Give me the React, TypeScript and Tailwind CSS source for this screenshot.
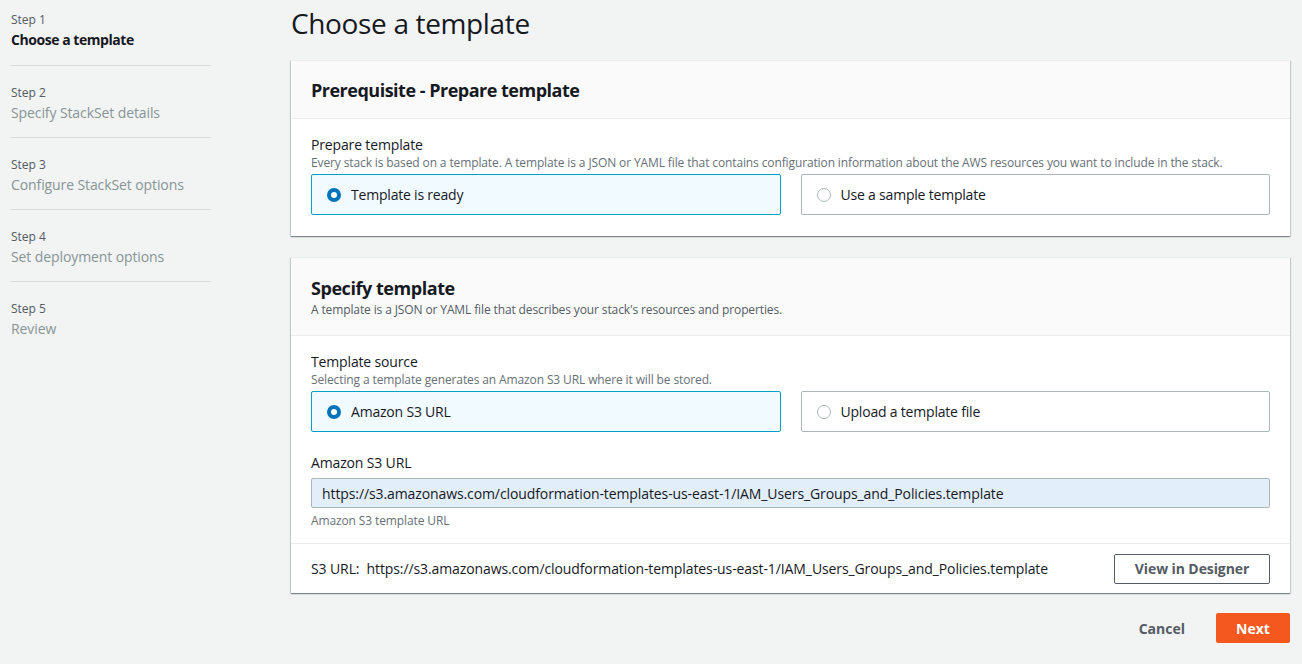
import React from "react";

const font = { fontFamily: '"Open Sans", "Noto Sans", Arial, sans-serif' };

function Radio({ checked }: { checked: boolean }) {
  return checked ? (
    <span className="w-[14px] h-[14px] rounded-full bg-[#0073bb] flex items-center justify-center shrink-0">
      <span className="w-[6px] h-[6px] rounded-full bg-white" />
    </span>
  ) : (
    <span className="w-[14px] h-[14px] rounded-full border border-[#aab7b8] bg-white shrink-0" />
  );
}

function Tile({ label, checked }: { label: string; checked: boolean }) {
  return (
    <div
      className={
        "flex-1 h-[41px] flex items-center gap-[10px] px-[15px] rounded-[2px] border " +
        (checked ? "border-[#00a1c9] bg-[#f1faff]" : "border-[#aab7b8] bg-white")
      }
    >
      <Radio checked={checked} />
      <span className="text-[14px] text-[#16191f] tracking-[-0.2px]">{label}</span>
    </div>
  );
}

const steps = [
  { n: "Step 1", t: "Choose a template", active: true },
  { n: "Step 2", t: "Specify StackSet details" },
  { n: "Step 3", t: "Configure StackSet options" },
  { n: "Step 4", t: "Set deployment options" },
  { n: "Step 5", t: "Review" },
];

const cardShadow =
  "shadow-[0_1px_1px_0_rgba(0,28,36,0.3),1px_1px_1px_0_rgba(0,28,36,0.15),-1px_1px_1px_0_rgba(0,28,36,0.15)]";

export default function App() {
  return (
    <div className="w-[1302px] h-[664px] bg-[#f2f3f3] flex overflow-hidden" style={font}>
      <nav className="w-[291px] pl-[11px] shrink-0">
        <div className="w-[200px]">
          {steps.map((s, i) => (
            <div
              key={s.n}
              className={
                (i === 0 ? "h-[66px] pt-[12px] " : "h-[72px] pt-[19px] ") +
                (i < steps.length - 1 ? "border-b border-[#d5dbdb]" : "")
              }
            >
              <div className="text-[12px] leading-[16px] text-[#545b64]">{s.n}</div>
              <div
                className={
                  "text-[14px] leading-[22px] mt-[1px] " +
                  (s.active ? "font-bold text-[#16191f] tracking-[-0.45px]" : "text-[#879596] tracking-[-0.1px]")
                }
              >
                {s.t}
              </div>
            </div>
          ))}
        </div>
      </nav>
      <main className="w-[999px] pt-[5px]">
        <h1 className="text-[28px] leading-[36px] text-[#16191f] tracking-[-0.35px]">Choose a template</h1>
        <section className={"mt-[19px] bg-white border-t border-[#eaeded] " + cardShadow}>
          <div className="bg-[#fafafa] border-b border-[#eaeded] h-[58px] px-[20px] flex items-center">
            <h2 className="text-[18px] font-bold text-[#16191f] leading-[24px] tracking-[-0.5px]">
              Prerequisite - Prepare template
            </h2>
          </div>
          <div className="px-[20px] pt-[16px] pb-[21px]">
            <div className="text-[14px] leading-[20px] text-[#16191f] tracking-[-0.15px]">Prepare template</div>
            <div className="text-[12px] leading-[16px] text-[#687078] tracking-[-0.12px]">
              Every stack is based on a template. A template is a JSON or YAML file that contains configuration information about the AWS resources you want to include in the stack.
            </div>
            <div className="flex gap-[20px] mt-[3px]">
              <Tile label="Template is ready" checked />
              <Tile label="Use a sample template" checked={false} />
            </div>
          </div>
        </section>
        <section className={"mt-[21px] bg-white border-t border-[#eaeded] " + cardShadow}>
          <div className="bg-[#fafafa] border-b border-[#eaeded] h-[78px] px-[20px] pt-[18px]">
            <h2 className="text-[18px] font-bold text-[#16191f] leading-[24px] tracking-[-0.45px]">Specify template</h2>
            <div className="text-[12px] leading-[16px] text-[#545b64] mt-[2px] tracking-[-0.12px]">
              A template is a JSON or YAML file that describes your stack's resources and properties.
            </div>
          </div>
          <div className="px-[20px] pt-[16px] pb-[14px] border-b border-[#eaeded]">
            <div className="text-[14px] leading-[20px] text-[#16191f] tracking-[-0.15px]">Template source</div>
            <div className="text-[12px] leading-[16px] text-[#687078] tracking-[-0.12px]">
              Selecting a template generates an Amazon S3 URL where it will be stored.
            </div>
            <div className="flex gap-[20px] mt-[3px]">
              <Tile label="Amazon S3 URL" checked />
              <Tile label="Upload a template file" checked={false} />
            </div>
            <div className="text-[14px] leading-[20px] text-[#16191f] mt-[21px] tracking-[-0.15px]">Amazon S3 URL</div>
            <div className="mt-[5px] h-[30px] border border-[#aab7b8] bg-[#e2eefa] rounded-[2px] flex items-center px-[10px] text-[14px] text-[#16191f] tracking-[-0.1px]">
              https://s3.amazonaws.com/cloudformation-templates-us-east-1/IAM_Users_Groups_and_Policies.template
            </div>
            <div className="text-[12px] leading-[16px] text-[#687078] mt-[5px] tracking-[-0.12px]">Amazon S3 template URL</div>
          </div>
          <div className="h-[49px] px-[20px] flex items-center justify-between">
            <div className="text-[14px] text-[#16191f] tracking-[-0.1px]">
              S3 URL:&nbsp;&nbsp;https://s3.amazonaws.com/cloudformation-templates-us-east-1/IAM_Users_Groups_and_Policies.template
            </div>
            <button className="w-[156px] h-[30px] border border-[#545b64] rounded-[2px] bg-white text-[14px] font-bold text-[#545b64] tracking-[-0.1px]">
              View in Designer
            </button>
          </div>
        </section>
        <div className="flex justify-end items-center mt-[20px] gap-[31px]">
          <span className="text-[14px] font-bold text-[#545b64]">Cancel</span>
          <button className="w-[74px] h-[30px] rounded-[2px] bg-[#f5581e] text-white text-[14px] font-bold">Next</button>
        </div>
      </main>
    </div>
  );
}
